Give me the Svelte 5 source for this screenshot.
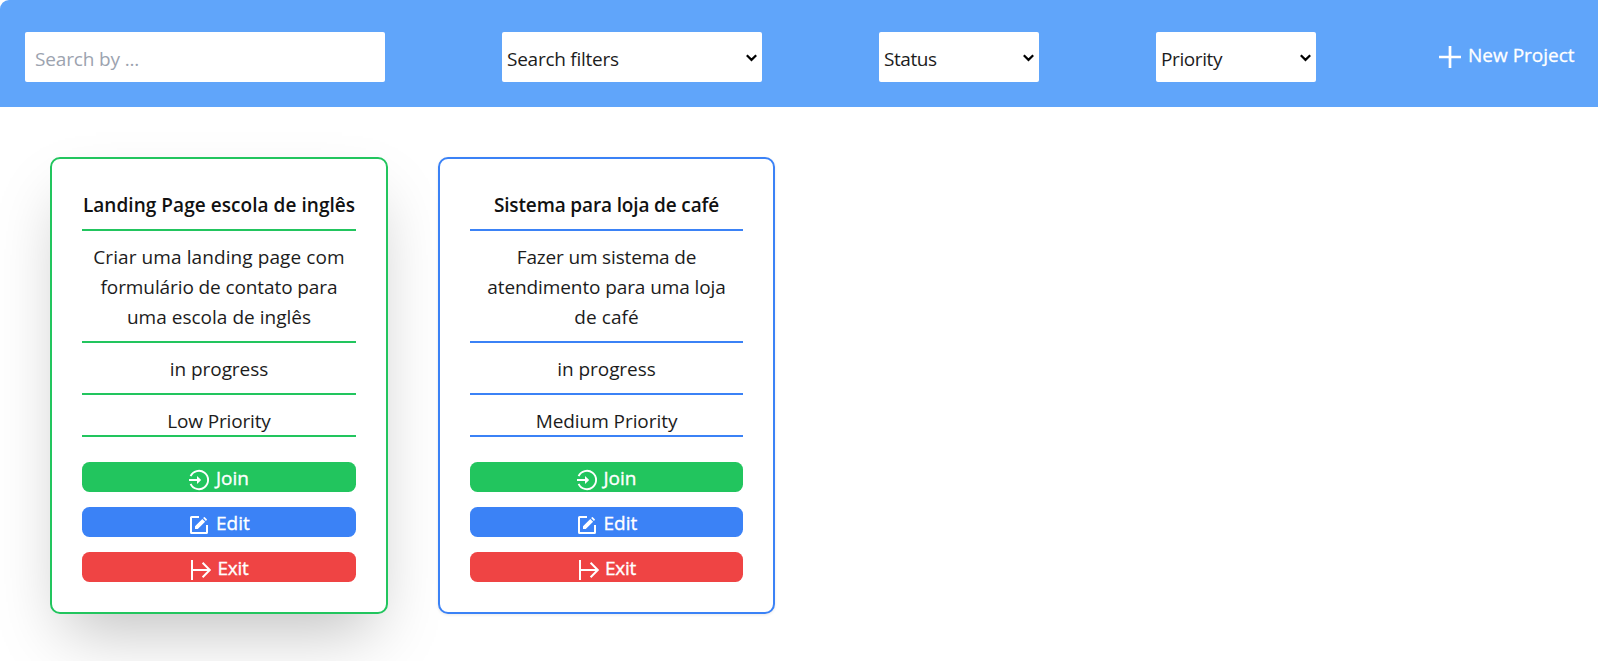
<script>
  const filters = [
    { label: 'Search filters', width: 260, spacing: -0.25 },
    { label: 'Status', width: 160, spacing: -0.45 },
    { label: 'Priority', width: 160, spacing: -0.4 },
  ];

  const projects = [
    {
      tone: 'low',
      title: 'Landing Page escola de inglês',
      titleSpacing: 0.05,
      lines: [
        ['Criar uma landing page com', 0.09],
        ['formulário de contato para', -0.1],
        ['uma escola de inglês', 0.02],
      ],
      priority: 'Low Priority',
      prioritySpacing: -0.16,
    },
    {
      tone: 'medium',
      title: 'Sistema para loja de café',
      titleSpacing: -0.14,
      lines: [
        ['Fazer um sistema de', -0.16],
        ['atendimento para uma loja', -0.1],
        ['de café', 0.1],
      ],
      priority: 'Medium Priority',
      prioritySpacing: -0.06,
    },
  ];
</script>

<div class="page">
  <header class="toolbar">
    <input class="field search" type="text" placeholder="Search by ..." />
    {#each filters as f}
      <button class="field select" style="width: {f.width}px; letter-spacing: {f.spacing}px">
        <span>{f.label}</span>
        <svg width="11" height="8" viewBox="0 0 11 8" aria-hidden="true">
          <path d="M0.8 1.2 5.5 5.9 10.2 1.2" fill="none" stroke="#000" stroke-width="2.2" />
        </svg>
      </button>
    {/each}
    <button class="new">
      <svg width="26" height="26" viewBox="0 0 26 26" aria-hidden="true">
        <path d="M13 2v22M2 13h22" fill="none" stroke="#fff" stroke-width="2.7" />
      </svg>
      <span>New Project</span>
    </button>
  </header>

  <main class="grid">
    {#each projects as p}
      <article class="card {p.tone}">
        <h2 style="letter-spacing: {p.titleSpacing}px">{p.title}</h2>
        <p class="row">
          {#each p.lines as [text, spacing]}
            <span class="line" style="letter-spacing: {spacing}px">{text}</span>
          {/each}
        </p>
        <p class="row status">in progress</p>
        <p class="row priority" style="letter-spacing: {p.prioritySpacing}px">{p.priority}</p>
        <div class="actions">
          <button class="join">
            <svg width="26" height="26" viewBox="0 0 26 26" aria-hidden="true">
              <path d="M4.6 9.2A9.15 9.15 0 1 1 4.6 16.8" fill="none" stroke="#fff" stroke-width="1.9" />
              <path d="M3 13H12" stroke="#fff" stroke-width="2" />
              <path d="M11 9 15.2 13 11 17Z" fill="#fff" />
            </svg>
            <span>Join</span>
          </button>
          <button class="edit">
            <svg width="26" height="26" viewBox="0 0 26 26" aria-hidden="true">
              <path d="M13 5H5.6Q5 5 5 5.6V20.4Q5 21 5.6 21H20.4Q21 21 21 20.4V13" fill="none" stroke="#fff" stroke-width="2" />
              <path d="M9 17V14.2L16.3 6.9 19.1 9.7 11.8 17ZM17.1 6.1 18 5.2Q18.4 4.8 18.8 5.2L20.8 7.2Q21.2 7.6 20.8 8L19.9 8.9Z" fill="#fff" />
            </svg>
            <span>Edit</span>
          </button>
          <button class="exit">
            <svg width="26" height="26" viewBox="0 0 26 26" aria-hidden="true">
              <path d="M4 3V23M4 13H21.6M14.6 5.8 21.8 13 14.6 20.2" fill="none" stroke="#fff" stroke-width="2" />
            </svg>
            <span>Exit</span>
          </button>
        </div>
      </article>
    {/each}
  </main>
</div>

<style>
  :global(body) {
    background: #fff;
    overflow: hidden;
  }
  .page {
    box-sizing: border-box;
    width: 1598px;
    height: 661px;
    overflow: hidden;
    font: 400 19px/30px 'Open Sans', 'Noto Sans', sans-serif;
    color: #1c1c1c;
    background: #fff;
    border-radius: 9px 0 0 9px;
  }
  button,
  input {
    margin: 0;
    border: 0;
    font: inherit;
    color: inherit;
  }
  .toolbar {
    box-sizing: border-box;
    display: flex;
    gap: 117px;
    align-items: flex-start;
    height: 107px;
    padding: 32px 0 0 25px;
    background: #60a5fa;
  }
  .field {
    box-sizing: border-box;
    flex: none;
    height: 50px;
    border-radius: 2px;
    background: #fff;
  }
  .search {
    width: 360px;
    padding: 4px 10px 0;
    letter-spacing: -0.15px;
  }
  .search::placeholder {
    color: #9ca3af;
    opacity: 1;
  }
  .select {
    display: flex;
    align-items: center;
    justify-content: space-between;
    padding: 0 5px;
  }
  .select span {
    padding-top: 4px;
  }
  .select svg {
    margin-top: 2px;
  }
  .new {
    display: flex;
    flex: none;
    align-items: flex-start;
    gap: 5px;
    height: 50px;
    padding: 0 0 0 4px;
    background: none;
    color: #fff;
    white-space: nowrap;
    -webkit-text-stroke: 0.3px #fff;
  }
  .new svg {
    margin-top: 12px;
  }
  .new span {
    margin-top: 8px;
  }
  .grid {
    display: grid;
    grid-template-columns: 338px 337px;
    gap: 50px;
    padding: 50px;
  }
  .card {
    box-sizing: border-box;
    height: 457px;
    padding: 30px;
    border: 2px solid var(--tone);
    border-radius: 10px;
    background: #fff;
    text-align: center;
  }
  .low {
    --tone: #22c55e;
    box-shadow: 0 31px 62px -15px rgba(0, 0, 0, 0.25);
  }
  .medium {
    --tone: #3b82f6;
    box-shadow: 0 1px 3px rgba(0, 0, 0, 0.09);
  }
  h2 {
    margin: 0;
    padding: 1px 0 9px;
    border-bottom: 2px solid var(--tone);
    font: inherit;
    font-weight: 600;
    white-space: nowrap;
    color: #111;
  }
  .row {
    margin: 0;
    padding: 11px 0 9px;
    border-bottom: 2px solid var(--tone);
  }
  .line {
    display: block;
    white-space: nowrap;
  }
  .status {
    letter-spacing: -0.07px;
  }
  .priority {
    padding: 12px 0 0;
    line-height: 28px;
  }
  .actions {
    display: flex;
    flex-direction: column;
    gap: 15px;
    margin-top: 25px;
  }
  .actions button {
    display: flex;
    align-items: flex-start;
    justify-content: center;
    gap: 4px;
    height: 30px;
    padding: 0;
    border-radius: 7.5px;
    color: #fff;
    text-align: left;
    -webkit-text-stroke: 0.35px #fff;
  }
  .actions svg {
    flex: none;
    margin-top: 5px;
    margin-bottom: -1px;
  }
  .actions span {
    width: 36px;
    margin-top: 1px;
  }
  .join {
    background: #22c55e;
  }
  .edit {
    background: #3b82f6;
  }
  .exit {
    background: #ef4444;
    letter-spacing: -0.3px;
  }
  .actions .exit span {
    width: 32px;
    text-indent: -0.5px;
  }
</style>
